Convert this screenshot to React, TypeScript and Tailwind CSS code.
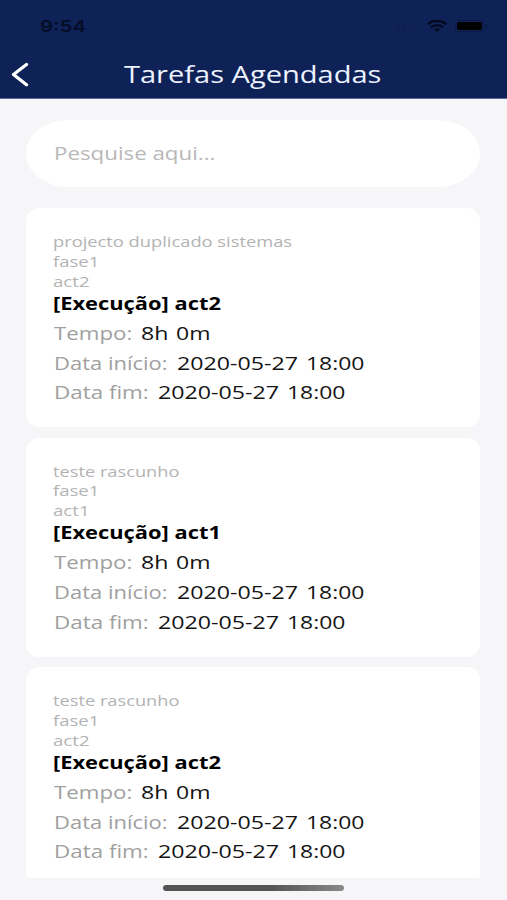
import { useLayoutEffect, useRef } from "react";

type FitProps = { text: string; width: number; className?: string };

/** A line of text whose glyphs are widened to fill the given width. */
function Fit({ text, width, className = "" }: FitProps) {
  const ref = useRef<HTMLSpanElement>(null);
  useLayoutEffect(() => {
    const el = ref.current;
    if (el) el.style.transform = `scaleX(${width / el.offsetWidth})`;
  }, [text, width]);
  return (
    <span className="block shrink-0" style={{ width }}>
      <span ref={ref} className={`inline-block origin-left whitespace-nowrap ${className}`}>
        {text}
      </span>
    </span>
  );
}

type Line = { text: string; width: number };
type Task = { project: Line; phase: Line; activity: Line; title: Line };

const tasks: Task[] = [
  {
    project: { text: "projecto duplicado sistemas", width: 238.5 },
    phase: { text: "fase1", width: 46 },
    activity: { text: "act2", width: 36 },
    title: { text: "[Execução] act2", width: 167.5 },
  },
  {
    project: { text: "teste rascunho", width: 127 },
    phase: { text: "fase1", width: 46 },
    activity: { text: "act1", width: 36 },
    title: { text: "[Execução] act1", width: 167.5 },
  },
  {
    project: { text: "teste rascunho", width: 127 },
    phase: { text: "fase1", width: 46 },
    activity: { text: "act2", width: 36 },
    title: { text: "[Execução] act2", width: 167.5 },
  },
];

function Row({ label, value }: { label: Line; value: Line[] }) {
  return (
    <div className="flex h-[29.8px] items-center gap-[9px] pl-[1.5px] text-[18px] leading-[30px]">
      <Fit {...label} className="text-[#a0a0a0]" />
      <div className="flex gap-[8px]">
        {value.map((v) => (
          <Fit key={v.text} {...v} className="font-medium text-[#141414]" />
        ))}
      </div>
    </div>
  );
}

const stamp: Line[] = [
  { text: "2020-05-27", width: 121 },
  { text: "18:00", width: 58.5 },
];

function Card({ task }: { task: Task }) {
  return (
    <article className="h-[219px] shrink-0 rounded-[13px] bg-white pt-[24px] pl-[26.5px]">
      <div className="text-[14.5px] leading-[19.8px] text-[#b3b3b3]">
        <Fit {...task.project} />
        <Fit {...task.phase} />
        <Fit {...task.activity} />
      </div>
      <div className="mt-[0.6px] mb-1 h-[22px] text-[18px] leading-[22px] font-bold text-black">
        <Fit {...task.title} />
      </div>
      <Row label={{ text: "Tempo:", width: 78 }} value={[{ text: "8h", width: 27 }, { text: "0m", width: 34.5 }]} />
      <Row label={{ text: "Data início:", width: 113.5 }} value={stamp} />
      <Row label={{ text: "Data fim:", width: 94.5 }} value={stamp} />
    </article>
  );
}

export default function App() {
  return (
    <div className="flex h-[900px] w-[507px] flex-col overflow-hidden bg-[#f6f6f9] font-['Open_Sans','Noto_Sans',sans-serif]">
      <header className="h-[98.5px] shrink-0 border-b border-[#5d6a92] bg-[#0f2257]">
        <div className="flex h-[52px] items-center justify-between pr-[20px] pl-[40px]">
          <Fit text="9:54" width={46} className="font-['Inter',sans-serif] text-[16px] font-semibold text-[#050c25]" />
          <div className="flex items-center">
            <div className="mt-1.5 mr-[9px] flex gap-[3px]">
              <i className="size-[3px] rounded-full bg-[#0d1d4d]" />
              <i className="size-[3px] rounded-full bg-[#0d1d4d]" />
              <i className="size-[3px] rounded-full bg-[#0d1d4d]" />
              <i className="size-[3px] rounded-full bg-[#0d1d4d]" />
            </div>
            <svg className="mr-[8px] h-[12px] w-[20px]" viewBox="0 0 20 12" fill="none" stroke="#040a1e" preserveAspectRatio="none">
              <path d="M.8 4.2C6-.5 14-.5 19.2 4.2" strokeWidth="2.4" />
              <path d="M4 7.4c3.4-3 8.6-3 12 0" strokeWidth="2.2" />
              <path d="M7 9.4c1.7-1.5 4.3-1.5 6 0L10 12z" fill="#040a1e" stroke="none" />
            </svg>
            <div className="flex h-[12px] w-[29px] items-center justify-center rounded-[3.5px] border border-[#0b1944]">
              <div className="h-[8px] w-[25px] rounded-[2px] bg-black" />
            </div>
            <div className="ml-px h-[4px] w-[2px] rounded-r-full bg-[#0b1944]" />
          </div>
        </div>
        <div className="flex h-[45px] items-center">
          <svg className="mr-[95px] ml-[11px] h-[25px] w-[18px]" viewBox="0 0 18 25" fill="none" stroke="#fff" strokeWidth="3.3" strokeLinecap="round" strokeLinejoin="round">
            <path d="M15.5 2.5 2.5 12.5 15.5 22.8" />
          </svg>
          <h1 className="text-[23px] leading-[45px] text-[#edf2ff]">
            <Fit text="Tarefas Agendadas" width={257.5} />
          </h1>
        </div>
      </header>
      <main className="mr-[27px] ml-[26px] flex h-[779.5px] shrink-0 flex-col overflow-hidden pt-[21.5px]">
        <div className="mb-[21.5px] flex h-[66.5px] shrink-0 items-center rounded-[42px/33px] bg-white pl-[28px] text-[19px] text-[#b8b8b8]">
          <Fit text="Pesquise aqui..." width={162} />
        </div>
        <div className="flex min-h-0 flex-1 flex-col gap-[10.5px] overflow-hidden">
          {tasks.map((task, i) => (
            <Card key={i} task={task} />
          ))}
        </div>
      </main>
      <div className="mt-[7px] ml-[163px] h-[6px] w-[181px] rounded-full bg-linear-to-r from-[#555] from-60% to-[#8a8a8a]" />
    </div>
  );
}
